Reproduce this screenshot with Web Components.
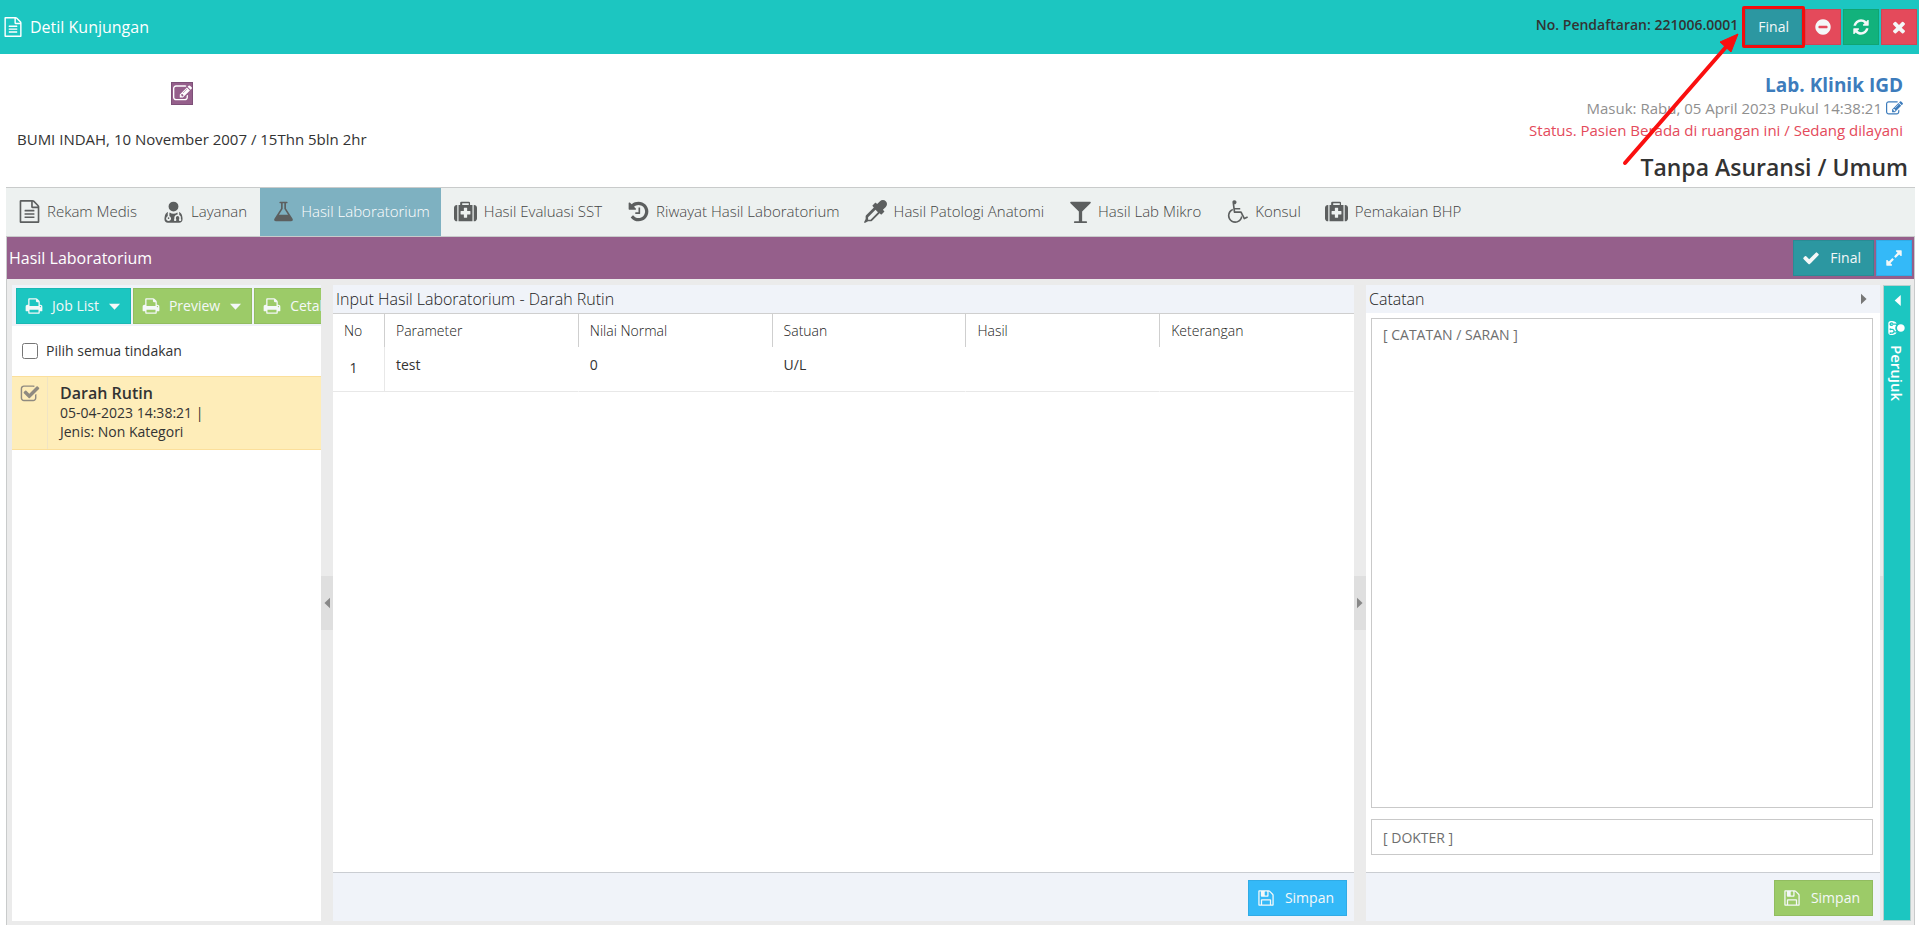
<!DOCTYPE html>
<html lang="id">
<head>
<meta charset="utf-8">
<meta name="viewport" content="width=device-width, initial-scale=1">
<title>Detil Kunjungan</title>
<style>
  html, body { margin: 0; min-height: 100%; background: #fff; }
  body { font: 14px/20px "Open Sans", "Noto Sans", sans-serif; color: #333; }
</style>
</head>
<body>
<visit-page></visit-page>

<script>
const ICONS = {
  file: 'M1596 380q28 28 48 76t20 88v1152q0 40-28 68t-68 28h-1344q-40 0-68-28t-28-68v-1600q0-40 28-68t68-28h896q40 0 88 20t76 48zm-444-244v376h376q-10-29-22-41l-313-313q-12-12-41-22zm384 1528v-1024h-416q-40 0-68-28t-28-68v-416h-768v1536h1280zm-1024-864q0-14 9-23t23-9h704q14 0 23 9t9 23v64q0 14-9 23t-23 9h-704q-14 0-23-9t-9-23v-64zm736 224q14 0 23 9t9 23v64q0 14-9 23t-23 9h-704q-14 0-23-9t-9-23v-64q0-14 9-23t23-9h704zm0 256q14 0 23 9t9 23v64q0 14-9 23t-23 9h-704q-14 0-23-9t-9-23v-64q0-14 9-23t23-9h704z',
  edit: 'M888 1184l116-116-152-152-116 116v56h96v96h56zm440-720q-16-16-33 1l-350 350q-17 17-1 33t33-1l350-350q17-17 1-33zm80 594v190q0 119-84.5 203.5t-203.5 84.5h-832q-119 0-203.5-84.5t-84.5-203.5v-832q0-119 84.5-203.5t203.5-84.5h832q63 0 117 25 15 7 18 23 3 17-9 29l-49 49q-14 14-32 8-23-6-45-6h-832q-66 0-113 47t-47 113v832q0 66 47 113t113 47h832q66 0 113-47t47-113v-126q0-13 9-22l64-64q15-15 35-7t20 29zm-96-738l288 288-672 672h-288v-288zm444 132l-92 92-288-288 92-92q28-28 68-28t68 28l152 152q28 28 28 68t-28 68z',
  check: 'M1671 566q0 40-28 68l-724 724-136 136q-28 28-68 28t-68-28l-136-136-362-362q-28-28-28-68t28-68l136-136q28-28 68-28t68 28l294 295 656-657q28-28 68-28t68 28l136 136q28 28 28 68z',
  times: 'M1490 1322q0 40-28 68l-136 136q-28 28-68 28t-68-28l-294-294-294 294q-28 28-68 28t-68-28l-136-136q-28-28-28-68t28-68l294-294-294-294q-28-28-28-68t28-68l136-136q28-28 68-28t68 28l294 294 294-294q28-28 68-28t68 28l136 136q28 28 28 68t-28 68l-294 294 294 294q28 28 28 68z',
  minus: 'M1344 960v-128q0-26-19-45t-45-19h-768q-26 0-45 19t-19 45v128q0 26 19 45t45 19h768q26 0 45-19t19-45zm320-64q0 209-103 385.5t-279.5 279.5-385.5 103-385.5-103-279.5-279.5-103-385.5 103-385.5 279.5-279.5 385.5-103 385.5 103 279.5 279.5 103 385.5z',
  refresh: 'M1639 1056q0 5-1 7-64 268-268 434.5t-478 166.5q-146 0-282.5-55t-243.5-157l-129 129q-19 19-45 19t-45-19-19-45v-448q0-26 19-45t45-19h448q26 0 45 19t19 45-19 45l-137 137q71 66 161 102t187 36q134 0 250-65t186-179q11-17 53-117 8-23 30-23h192q13 0 22.5 9.5t9.5 22.5zm25-800v448q0 26-19 45t-45 19h-448q-26 0-45-19t-19-45 19-45l138-138q-148-137-349-137-134 0-250 65t-186 179q-11 17-53 117-8 23-30 23h-199q-13 0-22.5-9.5t-9.5-22.5v-7q65-268 270-434.5t480-166.5q146 0 284 55.5t245 156.5l130-129q19-19 45-19t45 19 19 45z',
  expand: 'M883 1056q0 13-10 23l-332 332 144 144q19 19 19 45t-19 45-45 19h-448q-26 0-45-19t-19-45v-448q0-26 19-45t45-19 45 19l144 144 332-332q10-10 23-10t23 10l114 114q10 10 10 23zm781-864v448q0 26-19 45t-45 19-45-19l-144-144-332 332q-10 10-23 10t-23-10l-114-114q-10-10-10-23t10-23l332-332-144-144q-19-19-19-45t19-45 45-19h448q26 0 45 19t19 45z',
  print: 'M448 1536h896v-256h-896v256zm0-640h896v-384h-160q-40 0-68-28t-28-68v-160h-640v640zm1152 64q0-26-19-45t-45-19-45 19-19 45 19 45 45 19 45-19 19-45zm128 0v416q0 13-9.5 22.5t-22.5 9.5h-224v160q0 40-28 68t-68 28h-960q-40 0-68-28t-28-68v-160h-224q-13 0-22.5-9.5t-9.5-22.5v-416q0-79 56.5-135.5t135.5-56.5h64v-544q0-40 28-68t68-28h672q40 0 88 20t76 48l152 152q28 28 48 76t20 88v256h64q79 0 135.5 56.5t56.5 135.5z',
  save: 'M512 1536h768v-384h-768v384zm896 0h128v-896q0-14-10-38.5t-20-34.5l-281-281q-10-10-34-20t-39-10v416q0 40-28 68t-68 28h-576q-40 0-68-28t-28-68v-416h-128v1280h128v-416q0-40 28-68t68-28h832q40 0 68 28t28 68v416zm-384-928v-320q0-13-9.5-22.5t-22.5-9.5h-192q-13 0-22.5 9.5t-9.5 22.5v320q0 13 9.5 22.5t22.5 9.5h192q13 0 22.5-9.5t9.5-22.5zm640 32v928q0 40-28 68t-68 28h-1344q-40 0-68-28t-28-68v-1344q0-40 28-68t68-28h928q40 0 88 20t76 48l280 280q28 28 48 76t20 88z',
  flask: 'M1591 1448q56 89 21.5 152.5t-140.5 63.5h-1152q-106 0-140.5-63.5t21.5-152.5l503-793v-399h-64q-26 0-45-19t-19-45 19-45 45-19h512q26 0 45 19t19 45-19 45-45 19h-64v399zm-779-725l-272 429h712l-272-429-20-31v-436h-128v436z',
  medkit: 'M1280 1088v-192q0-14-9-23t-23-9h-224v-224q0-14-9-23t-23-9h-192q-14 0-23 9t-9 23v224h-224q-14 0-23 9t-9 23v192q0 14 9 23t23 9h224v224q0 14 9 23t23 9h192q14 0 23-9t9-23v-224h224q14 0 23-9t9-23zm-640-704h512v-128h-512v128zm-384 0v1280h-32q-92 0-158-66t-66-158v-832q0-92 66-158t158-66h32zm1184 0v1280h-1088v-1280h128v-160q0-40 28-68t68-28h576q40 0 68 28t28 68v160h128zm352 224v832q0 92-66 158t-158 66h-32v-1280h32q92 0 158 66t66 158z',
  history: 'M1664 896q0 156-61 298t-164 245-245 164-298 61q-172 0-327-72.5t-264-204.5q-7-10-6.5-22.5t8.5-20.5l137-138q10-9 25-9 16 2 23 12 73 95 179 147t225 52q104 0 198.5-40.5t163.5-109.5 109.5-163.5 40.5-198.5-40.5-198.5-109.5-163.5-163.5-109.5-198.5-40.5q-98 0-188 35.5t-160 101.5l137 138q31 30 14 69-17 40-59 40h-448q-26 0-45-19t-19-45v-448q0-42 40-59 39-17 69 14l130 129q107-101 244.5-156.5t284.5-55.5q156 0 298 61t245 164 164 245 61 298zm-640-288v448q0 14-9 23t-23 9h-320q-14 0-23-9t-9-23v-64q0-14 9-23t23-9h224v-352q0-14 9-23t23-9h64q14 0 23 9t9 23z',
  dropper: 'M1698 94q94 94 94 226.5t-94 225.5l-225 223 104 104q10 10 10 23t-10 23l-210 210q-10 10-23 10t-23-10l-105-105-603 603q-37 37-90 37h-203l-256 128-64-64 128-256v-203q0-53 37-90l603-603-105-105q-10-10-10-23t10-23l210-210q10-10 23-10t23 10l104 104 223-225q93-94 225.5-94t226.5 94zm-1186 1442l576-576-192-192-576 576v192h192z',
  glass: 'M1699 186q0 35-43 78l-632 632v768h320q26 0 45 19t19 45-19 45-45 19h-896q-26 0-45-19t-19-45 19-45 45-19h320v-768l-632-632q-43-43-43-78 0-23 18-36.5t38-17.5 43-4h1408q23 0 43 4t38 17.5 18 36.5z',
  wheelchair: 'M1167 1187l102 204q-58 179-210 290t-339 111q-156 0-288.5-77.5t-210-210-77.5-288.5q0-181 104.5-330t274.5-211l17 131q-122 54-195 165.5t-73 244.5q0 185 131.5 316.5t316.5 131.5q126 0 232.5-65t165-175.5 49.5-236.5zm488 80l58 114-256 128q-13 7-29 7-40 0-57-35l-239-477h-472q-24 0-42.5-16.5t-21.5-40.5l-96-779q-2-17 6-42 14-51 57-82.5t97-31.5q66 0 113 47t47 113q0 69-52 117.5t-120 41.5l37 289h423v128h-407l16 128h455q40 0 57 35l228 455z',
  doctor: 'M576 1408q0 26-19 45t-45 19-45-19-19-45 19-45 45-19 45 19 19 45zm1024 100q0 121-73 188t-194 67h-874q-121 0-194-67t-73-188q0-68 5.5-131t24-138 47.5-132.5 81-103 120-60.5q-22 52-22 120v203q-58 20-93 70t-35 111q0 80 56 136t136 56 136-56 56-136q0-61-35.5-111t-92.5-70v-203q0-62 25-93 132 104 295 104t295-104q25 31 25 93v64q-106 0-181 75t-75 181v89q-32 29-32 71 0 40 28 68t68 28 68-28 28-68q0-42-32-71v-89q0-52 38-90t90-38 90 38 38 90v89q-32 29-32 71 0 40 28 68t68 28 68-28 28-68q0-42-32-71v-89q0-68-34.5-127.5t-93.5-93.5q0-10 .5-42.5t0-48-2.5-41.5-7-47-13-40q68 15 120 60.5t81 103 47.5 132.5 24 138 5.5 131zm-320-996q0 159-112.5 271.5t-271.5 112.5-271.5-112.5-112.5-271.5 112.5-271.5 271.5-112.5 271.5 112.5 112.5 271.5z',
  checked: 'M1472 930v318q0 119-84.5 203.5t-203.5 84.5h-832q-119 0-203.5-84.5t-84.5-203.5v-832q0-119 84.5-203.5t203.5-84.5h832q63 0 117 25 15 7 18 23 3 17-9 29l-49 49q-10 10-23 10-3 0-9-2-23-6-45-6h-832q-66 0-113 47t-47 113v832q0 66 47 113t113 47h832q66 0 113-47t47-113v-254q0-13 9-22l64-64q10-10 23-10 6 0 12 3 20 8 20 29zm231-489l-814 814q-24 24-57 24t-57-24l-430-430q-24-24-24-57t24-57l110-110q24-24 57-24t57 24l263 263 647-647q24-24 57-24t57 24l110 110q24 24 24 57t-24 57z',
  down: 'M128 512h1536L896 1344z',
  left: 'M1344 128v1536L512 896z',
  right: 'M448 128v1536L1280 896z'
};

function define(name, html, setup) {
  const tpl = document.createElement('template');
  tpl.innerHTML = html;
  customElements.define(name, class extends HTMLElement {
    constructor() {
      super();
      this.attachShadow({ mode: 'open' }).append(tpl.content.cloneNode(true));
    }
    connectedCallback() { if (setup) setup(this, this.shadowRoot); }
  });
}

/* Icon: name="..." size="px" */
define('ui-icon', `
<style>
  :host { display: inline-flex; flex: none; }
  svg { display: block; fill: currentColor; overflow: visible; }
</style>
<svg viewBox="0 0 1792 1792" aria-hidden="true"><path></path></svg>`, (el, root) => {
  const svg = root.querySelector('svg');
  const size = el.getAttribute('size') || '18';
  svg.setAttribute('width', size);
  svg.setAttribute('height', size);
  root.querySelector('path').setAttribute('d', ICONS[el.getAttribute('name')]);
});

/* Push button: icon, tone, label for icon-only buttons, menu for a drop-down arrow */
define('ui-button', `
<style>
  :host { display: inline-flex; flex: none; height: 36px; --bg: #2c97a1; }
  :host([tone="red"]) { --bg: #e44a5b; }
  :host([tone="green"]) { --bg: #12b27c; }
  :host([tone="blue"]) { --bg: #34b9f8; }
  :host([tone="teal"]) { --bg: #1cc6c1; }
  :host([tone="lime"]) { --bg: #9ccb68; }
  button { display: flex; align-items: center; justify-content: center; gap: 10px; box-sizing: border-box; min-width: 36px; height: 100%;
    padding: 0 12px 0 8px; border: 1px solid rgba(0, 0, 0, .07); background: var(--bg); color: #f4f8f8; font: inherit; white-space: nowrap; }
  :host([label]) button { padding: 0 8px; }
  :host([menu]) button { gap: 9px; padding: 0 9px 0 8px; }
  :host([wide]) button { padding: 0 12px; }
</style>
<button type="button"></button>`, (el, root) => {
  const b = root.querySelector('button');
  const icon = el.getAttribute('icon');
  const label = el.getAttribute('label');
  if (label) b.setAttribute('aria-label', label);
  b.innerHTML = (icon ? `<ui-icon name="${icon}" size="18"></ui-icon>` : '')
    + (label ? '' : '<span><slot></slot></span>')
    + (el.hasAttribute('menu') ? '<ui-icon name="down" size="13"></ui-icon>' : '');
});

define('app-bar', `
<style>
  :host { display: flex; align-items: center; height: 54px; padding-right: 2px; background: #1cc6c1; color: #fff; }
  h1 { display: flex; align-items: center; gap: 7px; flex: 1; margin: 0 0 0 3px; font-size: 16px; font-weight: 400; }
  strong { margin-right: 7px; color: #333; font-size: 14px; font-weight: 600; line-height: 24px; padding-bottom: 4px; }
  .actions { display: flex; gap: 2px; }
  .marked { display: flex; position: relative; margin-right: 1px; }
  .marked::after { content: ""; position: absolute; inset: -3px; border: 3px solid #f20d0d; border-radius: 2px; pointer-events: none; }
</style>
<h1><ui-icon name="file" size="20"></ui-icon>Detil Kunjungan</h1>
<strong>No. Pendaftaran: 221006.0001</strong>
<div class="actions">
  <span class="marked"><ui-button wide>Final</ui-button></span>
  <ui-button tone="red" icon="minus" label="Batal"></ui-button>
  <ui-button tone="green" icon="refresh" label="Muat ulang"></ui-button>
  <ui-button tone="red" icon="times" label="Tutup"></ui-button>
</div>`);

define('patient-header', `
<style>
  :host { display: flex; justify-content: space-between; box-sizing: border-box; height: 133px; padding: 0 8px 0 17px; }
  .who { display: flex; flex-direction: column; align-items: flex-start; }
  .edit { display: flex; align-items: center; justify-content: center; margin: 28px 0 22px 154px; width: 22px; height: 23px; padding: 0;
    border: 1px solid #7d5078; background: #955f8b; color: #fff; }
  p { margin: 0; font-size: 15px; }
  .born { line-height: 24px; }
  .where { text-align: right; padding-top: 20px; }
  .where > * { padding-right: 8px; }
  h2 { margin: 0; font-size: 19px; line-height: 23px; font-weight: 700; color: #3d7cbc; }
  .in { display: flex; justify-content: flex-end; align-items: center; gap: 4px; color: #8f8f8f; line-height: 22px; }
  .in a { color: #3d7cbc; display: flex; }
  .status { color: #e44a5b; line-height: 22px; }
  .payer { margin-top: 10px; padding-right: 3px; font-size: 23px; line-height: 32px; font-weight: 600; }
</style>
<div class="who">
  <button class="edit" type="button" aria-label="Ubah pasien"><ui-icon name="edit" size="19"></ui-icon></button>
  <p class="born">BUMI INDAH, 10 November 2007 / 15Thn 5bln 2hr</p>
</div>
<div class="where">
  <h2>Lab. Klinik IGD</h2>
  <p class="in">Masuk: Rabu, 05 April 2023 Pukul 14:38:21 <a href="#masuk" aria-label="Ubah waktu masuk"><ui-icon name="edit" size="17"></ui-icon></a></p>
  <p class="status">Status. Pasien Berada di ruangan ini / Sedang dilayani</p>
  <p class="payer">Tanpa Asuransi / Umum</p>
</div>`);

define('tab-link', `
<style>
  :host { display: block; }
  a { display: flex; align-items: center; gap: 6px; box-sizing: border-box; height: 48px; padding: 0 11px 2px; color: #444; text-decoration: none; font-size: 15px; font-weight: 300; white-space: nowrap; }
  i { display: flex; justify-content: center; width: 24px; color: #5c5f5f; }
  :host([active]) a { background: #7eb1c1; color: #fff; }
</style>
<a href="#tab"><i></i><span><slot></slot></span></a>`, (el, root) => {
  root.querySelector('i').innerHTML = `<ui-icon name="${el.getAttribute('icon')}" size="23"></ui-icon>`;
  if (el.hasAttribute('active')) root.querySelector('a').setAttribute('aria-current', 'page');
});

define('tab-strip', `
<style>
  :host { display: block; margin: 0 4px 0 6px; border: solid #c9cbcb; border-width: 1px 0; background: #edf1f0; }
  nav { display: flex; gap: 2px; }
</style>
<nav aria-label="Menu kunjungan"><slot></slot></nav>`);

define('section-bar', `
<style>
  :host { display: flex; align-items: center; gap: 2px; height: 42px; padding: 0 2px; background: #955f8b; color: #fff; }
  h2 { flex: 1; margin: 0; font-size: 16px; font-weight: 400; }
</style>
<h2>Hasil Laboratorium</h2>
<ui-button icon="check">Final</ui-button>
<ui-button tone="blue" icon="expand" label="Perbesar"></ui-button>`);

define('split-handle', `
<style>
  :host { display: flex; align-items: center; flex: 0 0 11px; }
  button { display: flex; align-items: center; justify-content: center; width: 100%; height: 54px; padding: 0; border: 0; background: #dfdfdf; color: #888; }
  :host([slim]) { flex-basis: 3px; }
</style>
<button type="button" aria-label="Lipat panel"></button>`, (el, root) => {
  if (el.hasAttribute('to')) root.querySelector('button').innerHTML = `<ui-icon name="${el.getAttribute('to')}" size="12"></ui-icon>`;
});

define('order-list', `
<style>
  :host { display: block; flex: 0 0 309px; overflow: hidden; background: #fff; }
  .tools { display: flex; gap: 2px; height: 36px; padding: 3px 0 2px 4px; background: #f0f3f9; overflow: hidden; }
  .all { display: flex; align-items: center; gap: 8px; height: 50px; padding-left: 10px; }
  .all input { width: 16px; height: 16px; margin: 0; }
  ul { list-style: none; margin: 0; padding: 0; }
  li { display: flex; box-sizing: border-box; height: 74px; border: solid #fbdf9b; border-width: 1px 0; background: #feedb9; }
  .pick { display: grid; justify-items: start; align-content: start; box-sizing: border-box; width: 36px; padding: 7px 0 0 8px; border-right: 1px solid #f0e4c4; color: #8f8a80; }
  .pick > * { grid-area: 1 / 1; }
  .pick input { margin: 0; width: 20px; height: 20px; opacity: 0; }
  .info { padding: 6px 0 0 12px; line-height: 19px; }
  strong { display: block; font-size: 16px; line-height: 20px; font-weight: 600; }
  .info span { display: block; }
</style>
<div class="tools">
  <ui-button tone="teal" icon="print" menu>Job List</ui-button>
  <ui-button tone="lime" icon="print" menu>Preview</ui-button>
  <ui-button tone="lime" icon="print" menu>Cetak</ui-button>
</div>
<label class="all"><input type="checkbox">Pilih semua tindakan</label>
<ul><li>
  <label class="pick"><ui-icon name="checked" size="20"></ui-icon><input type="checkbox" checked aria-label="Darah Rutin"></label>
  <div class="info"><strong>Darah Rutin</strong><span>05-04-2023 14:38:21 |</span><span>Jenis: Non Kategori</span></div>
</li></ul>`);

define('work-panel', `
<style>
  :host { display: flex; flex-direction: column; background: #fff; }
  header { display: flex; align-items: center; justify-content: space-between; box-sizing: border-box; height: 28px; padding: 0 10px 0 3px; background: #f0f3f9; }
  h3 { margin: 0; font-size: 16px; font-weight: 300; color: #222; }
  .body { flex: 1; display: flex; flex-direction: column; }
  footer { display: flex; justify-content: flex-end; box-sizing: border-box; height: 49px; padding: 7px 7px 0 0; border-top: 1px solid #cacdd2; background: #f0f3f9; }
</style>
<header><h3></h3><slot name="tool"></slot></header>
<div class="body"><slot></slot></div>
<footer><slot name="footer"></slot></footer>`, (el, root) => {
  root.querySelector('h3').textContent = el.getAttribute('heading');
});

define('result-table', `
<style>
  :host { display: block; border-top: 1px solid #cfcfcf; }
  table { width: 100%; table-layout: fixed; border-collapse: separate; border-spacing: 0; }
  th, td { box-sizing: border-box; padding: 0 11px; text-align: left; vertical-align: top; border-right: 1px solid transparent; }
  th { height: 33px; line-height: 33px; border-right-color: #cfcfcf; color: #222; font-weight: 300; }
  td { height: 45px; line-height: 36px; border-bottom: 1px solid #e8e8e8; }
  th:last-child { border-right-color: transparent; }
  th:first-child, td:first-child { width: 52px; }
  td:first-child { padding: 0 10px 0 0; text-align: center; line-height: 42px; border-right-color: #e8e8e8; }
</style>
<table>
  <thead><tr><th>No</th><th>Parameter</th><th>Nilai Normal</th><th>Satuan</th><th>Hasil</th><th>Keterangan</th></tr></thead>
  <tbody><tr><td>1</td><td>test</td><td>0</td><td>U/L</td><td></td><td></td></tr></tbody>
</table>`);

define('note-form', `
<style>
  :host { flex: 1; display: flex; flex-direction: column; gap: 11px; padding: 5px 7px 17px 5px; }
  textarea, input { box-sizing: border-box; width: 100%; margin: 0; border: 1px solid #c9c9c9; border-radius: 0; background: #fff; color: #333; font: inherit; padding: 6px 11px; outline: 0; resize: none; }
  textarea { flex: 1; display: block; }
  input { height: 36px; }
  ::placeholder { color: #6e6e6e; opacity: 1; }
</style>
<textarea aria-label="Catatan / Saran" placeholder="[ CATATAN / SARAN ]"></textarea>
<input type="text" aria-label="Dokter" placeholder="[ DOKTER ]">`);

define('side-dock', `
<style>
  :host { display: flex; flex: 0 0 28px; }
  button { display: flex; flex-direction: column; align-items: center; gap: 8px; box-sizing: border-box; width: 100%; padding: 8px 0; border: 1px solid #b9cfce; background: #1cc6c1; color: #fff; font: inherit; font-size: 15px; font-weight: 600; }
  .doc { transform: rotate(90deg); margin-top: 4px; }
  span { writing-mode: vertical-rl; }
</style>
<button type="button"><ui-icon name="left" size="13"></ui-icon><ui-icon class="doc" name="doctor" size="18"></ui-icon><span>Perujuk</span></button>`);

define('lab-workspace', `
<style>
  :host { flex: 1; display: flex; flex-direction: column; margin: 0 4px 0 6px; border: solid #c9cbcb; border-width: 0 1px; background: #ebebeb; }
  .panes { flex: 1; display: flex; padding: 6px 3px 4px 5px; }
  .center { flex: 1; min-width: 0; }
  .right { flex: 0 0 514px; }
  .toggle { display: flex; padding: 0; border: 0; background: none; color: #777; }
</style>
<section-bar></section-bar>
<div class="panes">
  <order-list></order-list>
  <split-handle to="left"></split-handle>
  <work-panel class="center" heading="Input Hasil Laboratorium - Darah Rutin">
    <result-table></result-table>
    <ui-button slot="footer" tone="blue" icon="save">Simpan</ui-button>
  </work-panel>
  <split-handle to="right"></split-handle>
  <work-panel class="right" heading="Catatan">
    <button class="toggle" slot="tool" type="button" aria-label="Lipat catatan"><ui-icon name="right" size="12"></ui-icon></button>
    <note-form></note-form>
    <ui-button slot="footer" tone="lime" icon="save">Simpan</ui-button>
  </work-panel>
  <split-handle slim></split-handle>
  <side-dock></side-dock>
</div>`);

/* Red pointer drawn over the page, leading to the marked Final button */
define('callout-arrow', `
<style>
  :host { display: block; position: absolute; top: 30px; right: 176px; width: 124px; height: 140px; pointer-events: none; }
  svg { display: block; }
</style>
<svg width="124" height="140" viewBox="0 0 124 140" aria-hidden="true">
  <path d="M6 133L107 17" stroke="#fa0f0f" stroke-width="4" stroke-linecap="round" fill="none"></path>
  <path d="M119 4L101 12L112 22Z" fill="#fa0f0f" stroke="#fa0f0f" stroke-width="1" stroke-linejoin="round"></path>
</svg>`);

define('visit-page', `
<style>
  :host { display: flex; flex-direction: column; position: relative; min-height: 100vh; }
</style>
<app-bar></app-bar>
<patient-header></patient-header>
<tab-strip>
  <tab-link icon="file">Rekam Medis</tab-link>
  <tab-link icon="doctor">Layanan</tab-link>
  <tab-link icon="flask" active>Hasil Laboratorium</tab-link>
  <tab-link icon="medkit">Hasil Evaluasi SST</tab-link>
  <tab-link icon="history">Riwayat Hasil Laboratorium</tab-link>
  <tab-link icon="dropper">Hasil Patologi Anatomi</tab-link>
  <tab-link icon="glass">Hasil Lab Mikro</tab-link>
  <tab-link icon="wheelchair">Konsul</tab-link>
  <tab-link icon="medkit">Pemakaian BHP</tab-link>
</tab-strip>
<lab-workspace></lab-workspace>
<callout-arrow></callout-arrow>`);
</script>
</body>
</html>
